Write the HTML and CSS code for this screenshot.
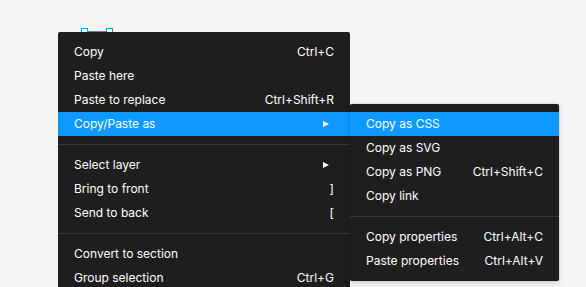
FILE: index.html
```html
<!DOCTYPE html>
<html lang="en">
<head>
  <meta charset="UTF-8">
  <title>Context menu</title>
  <link rel="stylesheet" href="styles.css">
</head>
<body>
  <div class="canvas">
    <div class="selection">
      <span class="handle handle-left"></span>
      <span class="handle handle-right"></span>
    </div>

    <div class="menu main-menu">
      <div class="item"><span>Copy</span><span class="shortcut">Ctrl+C</span></div>
      <div class="item"><span>Paste here</span></div>
      <div class="item"><span>Paste to replace</span><span class="shortcut">Ctrl+Shift+R</span></div>
      <div class="item active has-sub">
        <span>Copy/Paste as</span><span class="arrow"></span>
        <div class="menu submenu">
          <div class="item active"><span>Copy as CSS</span></div>
          <div class="item"><span>Copy as SVG</span></div>
          <div class="item"><span>Copy as PNG</span><span class="shortcut">Ctrl+Shift+C</span></div>
          <div class="item"><span>Copy link</span></div>
          <div class="divider"></div>
          <div class="item"><span>Copy properties</span><span class="shortcut">Ctrl+Alt+C</span></div>
          <div class="item"><span>Paste properties</span><span class="shortcut">Ctrl+Alt+V</span></div>
        </div>
      </div>
      <div class="divider"></div>
      <div class="item"><span>Select layer</span><span class="arrow"></span></div>
      <div class="item"><span>Bring to front</span><span class="shortcut">]</span></div>
      <div class="item"><span>Send to back</span><span class="shortcut">[</span></div>
      <div class="divider"></div>
      <div class="item"><span>Convert to section</span></div>
      <div class="item"><span>Group selection</span><span class="shortcut">Ctrl+G</span></div>
    </div>
  </div>
</body>
</html>
```

FILE: styles.css
```css
* {
  margin: 0;
  padding: 0;
  box-sizing: border-box;
}

body {
  font-family: 'Inter', sans-serif;
  background: #f5f5f5;
  overflow: hidden;
  height: 287px;
}

.canvas {
  position: relative;
  height: 100%;
}

.selection {
  position: absolute;
  left: 84px;
  top: 31px;
  width: 25px;
  height: 10px;
  border-top: 1px solid #0d99ff;
}

.handle {
  position: absolute;
  top: -4px;
  width: 7px;
  height: 7px;
  background: #fff;
  border: 1px solid #0d99ff;
}

.handle-left { left: -3px; }
.handle-right { right: -4px; }

.menu {
  background: #1e1e1e;
  color: #fff;
  font-size: 12px;
  padding: 8px 0;
  border-radius: 2px;
}

.main-menu {
  position: absolute;
  left: 58px;
  top: 32px;
  width: 292px;
}

.item {
  display: flex;
  align-items: center;
  justify-content: space-between;
  height: 24px;
  padding: 0 16px;
  line-height: 24px;
}

.item.active {
  background: #0d99ff;
}

.has-sub {
  position: relative;
}

.arrow {
  width: 0;
  height: 0;
  margin-right: 5px;
  border-top: 3.5px solid transparent;
  border-bottom: 3.5px solid transparent;
  border-left: 6px solid #fff;
}

.divider {
  height: 1px;
  margin: 8px 0;
  background: #383838;
}

.submenu {
  position: absolute;
  left: 100%;
  top: -8px;
  width: 209px;
  box-shadow: 0 2px 6px rgba(0, 0, 0, 0.15), 0 0 0 0.5px rgba(0, 0, 0, 0.1);
}
```
